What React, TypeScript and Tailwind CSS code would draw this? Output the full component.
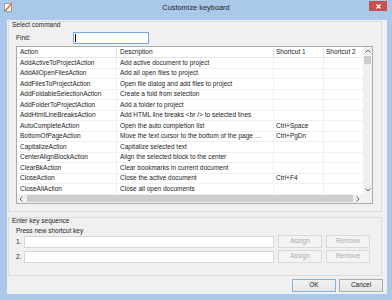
const rows: [string, string, string][] = [
  ['AddActiveToProjectAction', 'Add active document to project', ''],
  ['AddAllOpenFilesAction', 'Add all open files to project', ''],
  ['AddFilesToProjectAction', 'Open file dialog and add files to project', ''],
  ['AddFoldableSelectionAction', 'Create a fold from selection', ''],
  ['AddFolderToProjectAction', 'Add a folder to project', ''],
  ['AddHtmlLineBreaksAction', 'Add HTML line breaks <br /> to selected lines', ''],
  ['AutoCompleteAction', 'Open the auto completion list', 'Ctrl+Space'],
  ['BottomOfPageAction', 'Move the text cursor to the bottom of the page …', 'Ctrl+PgDn'],
  ['CapitalizeAction', 'Capitalize selected text', ''],
  ['CenterAlignBlockAction', 'Align the selected block to the center', ''],
  ['ClearBkAction', 'Clear bookmarks in current document', ''],
  ['CloseAction', 'Close the active document', 'Ctrl+F4'],
  ['CloseAllAction', 'Close all open documents', ''],
];

function Button({ label, primary, disabled }: { label: string; primary?: boolean; disabled?: boolean }) {
  const cls = disabled
    ? 'border-[#d9d9d9] bg-[#f3f3f3] text-[#acacac]'
    : primary
      ? 'border-[#7eb4ea] bg-gradient-to-b from-[#f2f2f2] to-[#e7e7e7] text-[#1b1b1b]'
      : 'border-[#acacac] bg-gradient-to-b from-[#f2f2f2] to-[#e5e5e5] text-[#1b1b1b]';
  return (
    <div className={`h-[13px] w-[44px] border flex items-center justify-center leading-none ${cls}`}>
      {label}
    </div>
  );
}

function Arrow({ dir }: { dir: 'up' | 'down' | 'left' | 'right' }) {
  const d = {
    up: 'M1.5 4.5 L4 2 L6.5 4.5',
    down: 'M1.5 2.5 L4 5 L6.5 2.5',
    left: 'M4.5 1.5 L2 4 L4.5 6.5',
    right: 'M2.5 1.5 L5 4 L2.5 6.5',
  }[dir];
  return (
    <svg width="8" height="8" viewBox="0 0 8 8">
      <path d={d} fill="none" stroke="#606060" strokeWidth="1" />
    </svg>
  );
}

export default function App() {
  return (
    <div className="w-[392px] h-[300px] bg-[#aac8ea] flex flex-col font-['Liberation_Sans',Arial,sans-serif] text-[6.5px] text-[#1b1b1b]">
      {/* title bar */}
      <div className="h-[20px] grid grid-cols-[1fr_auto_1fr]">
        <div className="pl-[4px] pt-[2px]">
          <svg width="9" height="10" viewBox="0 0 9 10">
            <rect x="0.5" y="1.5" width="7" height="8" fill="#fff" stroke="#9a9a9a" />
            <path d="M2 8 L7.5 1.5" stroke="#e8742a" strokeWidth="1.6" />
            <path d="M1.5 8.8 L2.3 7.4" stroke="#444" strokeWidth="1" />
          </svg>
        </div>
        <div className="pt-[4px] text-[7.4px] leading-[8px] text-[#1e1e1e]">Customize keyboard</div>
        <div className="flex justify-end pr-[5px] pt-[1px]">
          <div className="w-[18px] h-[10px] bg-[#c75050] flex items-center justify-center">
            <svg width="5" height="5" viewBox="0 0 5 5">
              <path d="M0.5 0.5 L4.5 4.5 M4.5 0.5 L0.5 4.5" stroke="#fff" strokeWidth="1.2" />
            </svg>
          </div>
        </div>
      </div>

      {/* body */}
      <div className="flex-1 ml-[7px] mr-[5px] mb-[6px] bg-[#f0f0f0] flex flex-col pl-[1px] pr-[5px] pt-[1px]">
        {/* Select command */}
        <div className="h-[191px] border border-[#dcdcdc] flex flex-col">
          <div className="h-[5px] leading-[5px] pl-[3px]">Select command</div>
          <div className="mt-[5px] h-[12px] flex items-center pl-[7px]">
            <div className="w-[57px]">Find:</div>
            <div className="w-[76px] h-[12px] bg-white border border-[#7aa7dc] flex items-center pl-[1px]">
              <div className="w-[1px] h-[8px] bg-black" />
            </div>
          </div>
          <div className="mt-[2px] ml-[7px] w-[357px] h-[158px] border border-[#ababab] bg-white grid grid-cols-[1fr_9px] grid-rows-[1fr_9px] overflow-hidden">
            <div className="overflow-hidden flex flex-col">
              <div className="h-[11px] flex border-b border-[#e5e5e5] shrink-0">
                <div className="w-[100px] shrink-0 pl-[3px] border-r border-[#e5e5e5] flex items-center">Action</div>
                <div className="w-[157px] shrink-0 pl-[3px] border-r border-[#e5e5e5] flex items-center">Description</div>
                <div className="w-[50px] shrink-0 pl-[2px] border-r border-[#e5e5e5] flex items-center">Shortcut 1</div>
                <div className="w-[50px] shrink-0 pl-[2px] flex items-center">Shortcut 2</div>
              </div>
              {rows.map(([a, d, s]) => (
                <div key={a} className="h-[10.5px] flex border-b border-[#f0f0f0] shrink-0">
                  <div className="w-[100px] shrink-0 pl-[3px] border-r border-[#f0f0f0] flex items-center whitespace-nowrap overflow-hidden">{a}</div>
                  <div className="w-[157px] shrink-0 pl-[3px] border-r border-[#f0f0f0] flex items-center whitespace-nowrap overflow-hidden">{d}</div>
                  <div className="w-[50px] shrink-0 pl-[2px] border-r border-[#f0f0f0] flex items-center whitespace-nowrap">{s}</div>
                  <div className="w-[50px] shrink-0" />
                </div>
              ))}
            </div>
            {/* vertical scrollbar */}
            <div className="bg-[#f0f0f0] flex flex-col items-center">
              <div className="h-[9px] flex items-center"><Arrow dir="up" /></div>
              <div className="w-[7px] h-[8px] bg-[#cdcdcd]" />
              <div className="flex-1" />
              <div className="h-[9px] flex items-center"><Arrow dir="down" /></div>
            </div>
            {/* horizontal scrollbar */}
            <div className="bg-[#f0f0f0] flex items-center">
              <div className="w-[10px] flex justify-center"><Arrow dir="left" /></div>
              <div className="flex-1 h-[7px] bg-[#cdcdcd]" />
              <div className="w-[10px] flex justify-center"><Arrow dir="right" /></div>
            </div>
            <div className="bg-[#f0f0f0]" />
          </div>
        </div>

        {/* Enter key sequence */}
        <div className="mt-[5px] h-[59px] border border-[#dcdcdc] flex flex-col">
          <div className="h-[5px] leading-[5px] pl-[3px]">Enter key sequence</div>
          <div className="mt-[4px] h-[7px] leading-[7px] pl-[7px]">Press new shortcut key</div>
          {['1.', '2.'].map((n, i) => (
            <div key={n} className={`${i === 0 ? 'mt-[1px]' : 'mt-[2px]'} h-[13px] flex items-end pl-[7px] gap-[4px]`}>
              <div className="w-[4px] h-[12px] flex items-center">{n}</div>
              <div className="w-[250px] h-[12px] bg-white border border-[#d5d5d5]" />
              <div className="self-start"><Button label="Assign" disabled /></div>
              <div className="self-start"><Button label="Remove" disabled /></div>
            </div>
          ))}
        </div>

        <div className="mt-[3px] h-[13px] flex justify-end gap-[3px] -mr-[1px]">
          <Button label="OK" primary />
          <Button label="Cancel" />
        </div>
      </div>
    </div>
  );
}
